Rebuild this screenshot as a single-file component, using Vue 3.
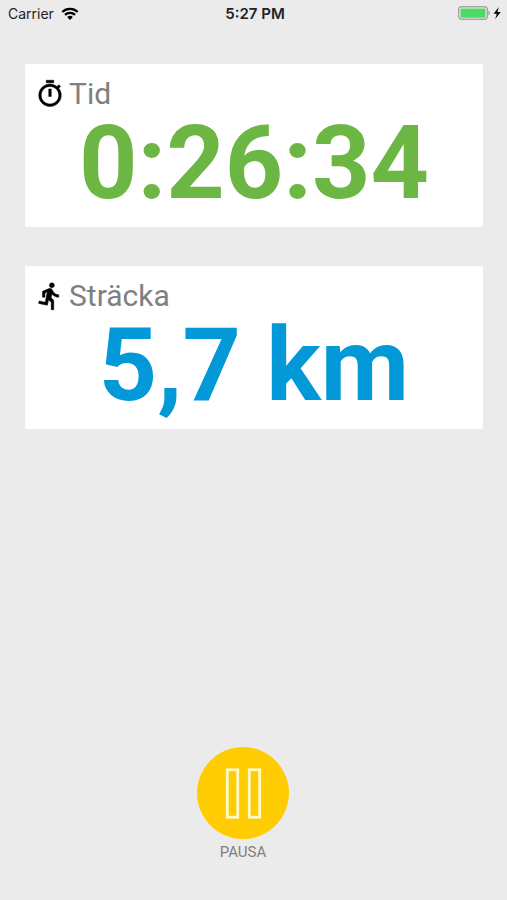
<template>
  <div class="screen">
    <header class="status-bar">
      <div class="carrier">
        <span>Carrier</span>
        <svg class="wifi" viewBox="0 0 18 13" aria-hidden="true">
          <path d="M1.3 5A11 11 0 0 1 16.7 5M4 7.8A7.2 7.2 0 0 1 14 7.8" fill="none" stroke="#000" stroke-width="2.3" />
          <path d="M9 13L6.2 10.1A4 4 0 0 1 11.8 10.1Z" fill="#000" />
        </svg>
      </div>
      <div class="clock">5:27 PM</div>
      <div class="battery">
        <svg viewBox="0 0 44 16" aria-hidden="true">
          <rect x="0.7" y="1.7" width="28.6" height="12.6" rx="3" fill="#f3f3f3" stroke="#a3a3a3" stroke-width="1.4" />
          <rect x="2.5" y="3.4" width="25" height="9.4" rx="1" fill="#4cd964" />
          <path d="M30.4 5.6Q32 6.5 32 8T30.4 10.4Z" fill="#a3a3a3" />
          <path d="M40.8 2L35.6 8.8H38.8L37.2 14L42.8 6.9H39.4Z" fill="#000" />
        </svg>
      </div>
    </header>

    <main class="stats">
      <section v-for="stat in stats" :key="stat.label" class="card">
        <h2 class="card-title">
          <svg class="card-icon" viewBox="0 0 24 24" aria-hidden="true">
            <path :d="stat.icon" />
          </svg>
          <span>{{ stat.label }}</span>
        </h2>
        <div class="card-value" :class="stat.color">{{ stat.value }}</div>
      </section>
    </main>

    <footer class="actions">
      <button id="pause" type="button" class="pause-button" aria-labelledby="pause-label" @click="togglePause">
        <svg viewBox="0 0 92 92" aria-hidden="true">
          <rect x="30.3" y="22.8" width="10.4" height="47.4" />
          <rect x="52.3" y="22.8" width="10.4" height="47.4" />
        </svg>
      </button>
      <label id="pause-label" for="pause" class="pause-label">PAUSA</label>
    </footer>
  </div>
</template>

<script setup>
import { ref } from 'vue'

const paused = ref(false)

const stats = ref([
  {
    label: 'Tid',
    value: '0:26:34',
    color: 'green',
    icon: 'M15 1H9v2h6V1zm-4 13h2V8h-2v6zm8.03-6.61l1.42-1.42c-.43-.51-.9-.99-1.41-1.41l-1.42 1.42C16.07 4.74 14.12 4 12 4c-4.97 0-9 4.03-9 9s4.02 9 9 9 9-4.03 9-9c0-2.12-.74-4.07-1.97-5.61zM12 20c-3.87 0-7-3.13-7-7s3.13-7 7-7 7 3.13 7 7-3.13 7-7 7z',
  },
  {
    label: 'Sträcka',
    value: '5,7 km',
    color: 'blue',
    icon: 'M13.49 5.48c1.1 0 2-.9 2-2s-.9-2-2-2-2 .9-2 2 .9 2 2 2zm-3.6 13.9l1-4.4 2.1 2v6h2v-7.5l-2.1-2 .6-3c1.3 1.5 3.3 2.5 5.5 2.5v-2c-1.9 0-3.5-1-4.3-2.4l-1-1.6c-.4-.6-1-1-1.7-1-.3 0-.5.1-.8.1l-5.2 2.2v4.7h2v-3.4l1.8-.7-1.6 8.1-4.9-1-.4 2 7 1.4z',
  },
])

function togglePause() {
  paused.value = !paused.value
}
</script>

<style>
body {
  margin: 0;
  background-color: #ebebeb;
}
</style>

<style scoped>
.screen {
  display: flex;
  flex-direction: column;
  min-height: 100vh;
  box-sizing: border-box;
  padding-bottom: 39px;
  background-color: #ebebeb;
  font-family: Roboto, "Liberation Sans", sans-serif;
}

.status-bar {
  display: grid;
  grid-template-columns: 1fr auto 1fr;
  align-items: center;
  height: 28px;
  padding: 0 5px 0 8px;
  font-family: Inter, "Liberation Sans", sans-serif;
  font-size: 14px;
  line-height: 20px;
  color: #222;
}

.carrier {
  display: flex;
  align-items: center;
  gap: 7px;
}

.wifi {
  width: 18px;
  height: 13px;
  margin-bottom: 2px;
}

.clock {
  font-size: 15px;
  font-weight: 600;
}

.battery {
  display: flex;
  justify-content: flex-end;
}

.battery svg {
  width: 44px;
  height: 16px;
  margin-bottom: 2px;
}

.stats {
  display: flex;
  flex-direction: column;
  gap: 39px;
  padding: 36px 24px 0 25px;
}

.card {
  padding: 14px 10px 11px;
  border-radius: 2px;
  background-color: #fff;
}

.card-title {
  display: flex;
  align-items: center;
  gap: 4px;
  margin: 0;
  font-size: 30px;
  font-weight: 400;
  line-height: 32px;
  color: #808080;
}

.card-icon {
  width: 30px;
  height: 30px;
  stroke: #000;
  stroke-width: 0.4;
}

.card-value {
  font-size: 102px;
  font-weight: 700;
  line-height: 106px;
  text-align: center;
  white-space: nowrap;
}

.green {
  color: #6cb644;
}

.blue {
  color: #0398d7;
}

.actions {
  display: flex;
  flex-direction: column;
  align-items: center;
  margin-top: auto;
  padding-right: 21px;
}

.pause-button {
  width: 92px;
  height: 92px;
  padding: 0;
  border: none;
  border-radius: 50%;
  background-color: #ffcc03;
  cursor: pointer;
}

.pause-button svg {
  display: block;
  width: 92px;
  height: 92px;
  fill: none;
  stroke: #fffbc8;
  stroke-width: 2.8;
}

.pause-label {
  margin-top: 4px;
  font-size: 15px;
  line-height: 18px;
  color: #808080;
}
</style>
